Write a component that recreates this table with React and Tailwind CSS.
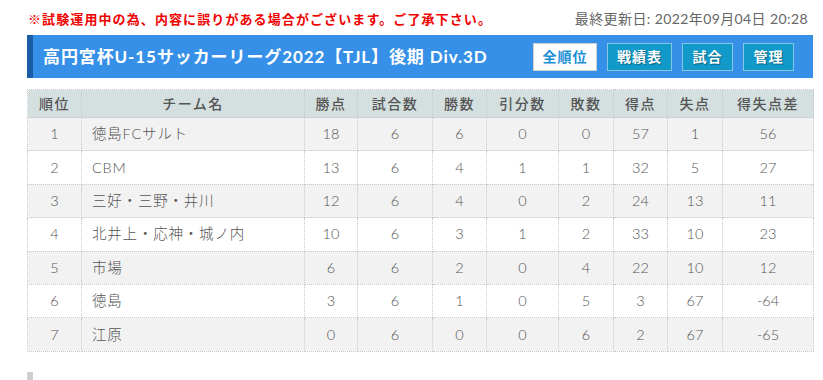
import React from "react";

const teams = [
  { rank: 1, name: "徳島FCサルト", pts: 18, played: 6, win: 6, draw: 0, lose: 0, gf: 57, ga: 1, diff: 56 },
  { rank: 2, name: "CBM", pts: 13, played: 6, win: 4, draw: 1, lose: 1, gf: 32, ga: 5, diff: 27 },
  { rank: 3, name: "三好・三野・井川", pts: 12, played: 6, win: 4, draw: 0, lose: 2, gf: 24, ga: 13, diff: 11 },
  { rank: 4, name: "北井上・応神・城ノ内", pts: 10, played: 6, win: 3, draw: 1, lose: 2, gf: 33, ga: 10, diff: 23 },
  { rank: 5, name: "市場", pts: 6, played: 6, win: 2, draw: 0, lose: 4, gf: 22, ga: 10, diff: 12 },
  { rank: 6, name: "徳島", pts: 3, played: 6, win: 1, draw: 0, lose: 5, gf: 3, ga: 67, diff: -64 },
  { rank: 7, name: "江原", pts: 0, played: 6, win: 0, draw: 0, lose: 6, gf: 2, ga: 67, diff: -65 },
];

const headers = [
  { label: "順位", w: "w-[54px]" },
  { label: "チーム名", w: "w-[223px]" },
  { label: "勝点", w: "w-[53px]" },
  { label: "試合数", w: "w-[75px]" },
  { label: "勝数", w: "w-[54px]" },
  { label: "引分数", w: "w-[72px]" },
  { label: "敗数", w: "w-[55px]" },
  { label: "得点", w: "w-[54px]" },
  { label: "失点", w: "w-[55px]" },
  { label: "得失点差", w: "w-[91px]" },
];

const cell = "border border-dotted border-[#c8c8c8] h-[33.4px] text-center";

export default function App() {
  return (
    <div className="w-[823px] h-[380px] overflow-hidden bg-white font-['Lato','Noto_Sans_CJK_JP',sans-serif]">
      <div className="mx-[27px] w-[786px]">
        {/* notice + updated */}
        <div className="flex items-end justify-between h-[30px] pb-[1px]">
          <p className="text-[13px] font-bold text-[#f00000] tracking-[1.1px] ml-[1px]">
            ※試験運用中の為、内容に誤りがある場合がございます。ご了承下さい。
          </p>
          <p className="text-[14px] text-[#666] mr-[5px] tracking-[0.4px]">最終更新日: 2022年09月04日 20:28</p>
        </div>

        {/* title bar */}
        <div className="mt-[5px] h-[43px] flex items-center justify-between bg-[#3790e8] border-l-[6px] border-[#1a5ca6] pl-[10px] pr-[19px]">
          <h1 className="text-white font-bold text-[17px] tracking-[0.9px]">
            高円宮杯U-15サッカーリーグ2022【TJL】後期 Div.3D
          </h1>
          <div className="flex gap-[10px]">
            <button className="h-[28px] w-[64px] bg-white border border-[#d0d0d0] text-[#1a8ed6] text-[14px] font-bold tracking-[1px]">
              全順位
            </button>
            <button className="h-[28px] w-[65px] bg-[#1199c9] border border-[#86c6e4] text-white text-[14px] font-bold tracking-[1px] [text-shadow:1px_1px_1px_rgba(0,0,0,0.35)]">
              戦績表
            </button>
            <button className="h-[28px] w-[51px] bg-[#1199c9] border border-[#86c6e4] text-white text-[14px] font-bold tracking-[1px] [text-shadow:1px_1px_1px_rgba(0,0,0,0.35)]">
              試合
            </button>
            <button className="h-[28px] w-[51px] bg-[#1199c9] border border-[#86c6e4] text-white text-[14px] font-bold tracking-[1px] [text-shadow:1px_1px_1px_rgba(0,0,0,0.35)]">
              管理
            </button>
          </div>
        </div>

        {/* standings */}
        <table className="mt-[11px] w-[786px] border-collapse table-fixed text-[14.5px] font-light text-[#555]">
          <thead>
            <tr className="bg-[#d4dfdf]">
              {headers.map((h) => (
                <th key={h.label} className={`${h.w} h-[28px] border border-dotted border-[#c8c8c8] font-medium text-[14px] tracking-[1.5px]`}>
                  {h.label}
                </th>
              ))}
            </tr>
          </thead>
          <tbody>
            {teams.map((t, i) => (
              <tr key={t.rank} className={i % 2 === 0 ? "bg-[#f2f2f2]" : "bg-white"}>
                <td className={cell}>{t.rank}</td>
                <td className="border border-dotted border-[#c8c8c8] h-[33.4px] text-left pl-[10px] tracking-[0.8px]">{t.name}</td>
                <td className={cell}>{t.pts}</td>
                <td className={cell}>{t.played}</td>
                <td className={cell}>{t.win}</td>
                <td className={cell}>{t.draw}</td>
                <td className={cell}>{t.lose}</td>
                <td className={cell}>{t.gf}</td>
                <td className={cell}>{t.ga}</td>
                <td className={cell}>{t.diff}</td>
              </tr>
            ))}
          </tbody>
        </table>

        {/* next section heading */}
        <div className="mt-[20px] border-l-[6px] border-[#cfcfcf] pl-[126px] h-[40px] flex items-start">
          <h2 className="mt-[4px] text-[22px] font-bold text-[#333] tracking-[2px]">高円宮杯 試合結果一覧</h2>
        </div>
      </div>
    </div>
  );
}
